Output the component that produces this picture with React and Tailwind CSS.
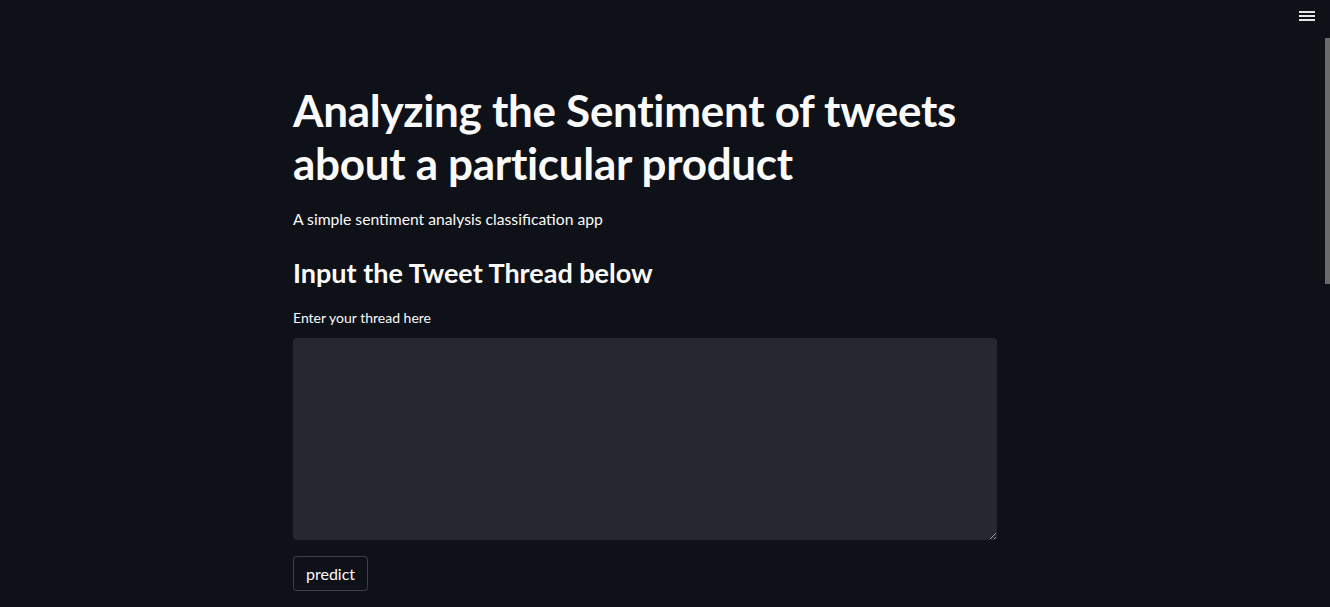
export default function App() {
  return (
    <main
      className="relative w-full min-h-screen bg-[#0e1117] text-[#fafafa] overflow-hidden"
      style={{ fontFamily: "Lato, 'Open Sans', sans-serif" }}
    >
      {/* top-right menu */}
      <button className="absolute right-[14px] top-[10px] flex flex-col gap-[2px] p-[1px]">
        <span className="block w-[16px] h-[2px] bg-[#e6e6e6]" />
        <span className="block w-[16px] h-[2px] bg-[#e6e6e6]" />
        <span className="block w-[16px] h-[2px] bg-[#e6e6e6]" />
      </button>

      {/* scrollbar thumb */}
      <div className="absolute right-0 top-[38px] w-[5px] h-[246px] bg-[#6a6a6a]" />

      <section className="ml-[293px] w-[704px] pt-[84px] flex flex-col">
        <h1 className="text-[44px] leading-[53px] font-bold tracking-[-0.3px]">
          Analyzing the Sentiment of tweets about a particular product
        </h1>
        <p className="mt-[17px] text-[15.7px] leading-[24px]">
          A simple sentiment analysis classification app
        </p>
        <h3 className="mt-[24px] text-[27px] leading-[36px] font-bold">
          Input the Tweet Thread below
        </h3>
        <label className="mt-[17px] text-[14px] leading-[20px]">
          Enter your thread here
        </label>
        <textarea className="mt-[10px] w-full h-[202px] rounded-[4px] bg-[#262730] outline-none p-3 text-[16px]" />
        <div className="mt-[16px]">
          <button className="h-[35px] px-[12px] rounded-[4px] border border-[rgba(250,250,250,0.2)] bg-[#0e1117] text-[16px] leading-[20px]">
            predict
          </button>
        </div>
      </section>
    </main>
  );
}
